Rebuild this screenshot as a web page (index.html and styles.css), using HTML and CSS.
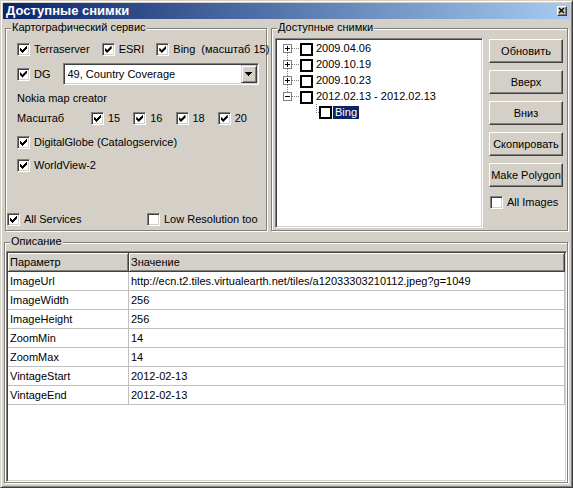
FILE: index.html
```html
<!DOCTYPE html>
<html lang="ru">
<head>
  <meta charset="UTF-8" />
  <title>Доступные снимки</title>
  <link rel="stylesheet" href="styles.css">
</head>
<body>

  <div class="window">

    <!-- Title bar -->
    <div class="titlebar">
      <span class="title">Доступные снимки</span>
      <span class="close-btn">
        <svg width="7" height="7" viewBox="0 0 7 7"><path d="M1 1 L6 6 M6 1 L1 6" stroke="#000" stroke-width="1.4" fill="none"/></svg>
      </span>
    </div>

    <div class="top-row">

      <!-- Map services -->
      <div class="group group-services">
        <span class="group-title">Картографический сервис</span>

        <div class="row">
          <label class="cb"><span class="box checked"></span>Terraserver</label>
          <label class="cb"><span class="box checked"></span>ESRI</label>
          <label class="cb"><span class="box checked"></span>Bing</label>
          <span class="scale-note">(масштаб 15)</span>
        </div>

        <div class="row row-dg">
          <label class="cb"><span class="box checked"></span>DG</label>
          <div class="combo">
            <span class="combo-text">49, Country Coverage</span>
            <span class="combo-btn"><span class="arrow"></span></span>
          </div>
        </div>

        <div class="row row-nokia">Nokia map creator</div>

        <div class="row row-scale">
          <span class="scale-label">Масштаб</span>
          <label class="cb"><span class="box checked"></span>15</label>
          <label class="cb"><span class="box checked"></span>16</label>
          <label class="cb"><span class="box checked"></span>18</label>
          <label class="cb"><span class="box checked"></span>20</label>
        </div>

        <div class="row row-dglobe">
          <label class="cb"><span class="box checked"></span>DigitalGlobe (Catalogservice)</label>
        </div>

        <div class="row row-wv">
          <label class="cb"><span class="box checked"></span>WorldView-2</label>
        </div>

        <div class="row row-bottom">
          <label class="cb cb-all"><span class="box checked"></span>All Services</label>
          <label class="cb"><span class="box"></span>Low Resolution too</label>
        </div>
      </div>

      <!-- Available images -->
      <div class="group group-images">
        <span class="group-title">Доступные снимки</span>

        <div class="tree">
          <div class="node has-next">
            <span class="exp"><svg width="7" height="7" viewBox="0 0 7 7"><path d="M1 3.5h5M3.5 1v5" stroke="#000" shape-rendering="crispEdges"/></svg></span>
            <span class="hline"></span><span class="tbox"></span><span class="node-text">2009.04.06</span>
          </div>
          <div class="node has-next">
            <span class="exp"><svg width="7" height="7" viewBox="0 0 7 7"><path d="M1 3.5h5M3.5 1v5" stroke="#000" shape-rendering="crispEdges"/></svg></span>
            <span class="hline"></span><span class="tbox"></span><span class="node-text">2009.10.19</span>
          </div>
          <div class="node has-next">
            <span class="exp"><svg width="7" height="7" viewBox="0 0 7 7"><path d="M1 3.5h5M3.5 1v5" stroke="#000" shape-rendering="crispEdges"/></svg></span>
            <span class="hline"></span><span class="tbox"></span><span class="node-text">2009.10.23</span>
          </div>
          <div class="node">
            <span class="exp"><svg width="7" height="7" viewBox="0 0 7 7"><path d="M1 3.5h5" stroke="#000" shape-rendering="crispEdges"/></svg></span>
            <span class="hline"></span><span class="tbox"></span><span class="node-text">2012.02.13 - 2012.02.13</span>
          </div>
          <div class="node child">
            <span class="elbow"></span><span class="tbox"></span><span class="sel">Bing</span>
          </div>
        </div>

        <div class="buttons">
          <button class="btn">Обновить</button>
          <button class="btn">Вверх</button>
          <button class="btn">Вниз</button>
          <button class="btn">Скопировать</button>
          <button class="btn">Make Polygon</button>
          <label class="cb cb-images"><span class="box"></span>All Images</label>
        </div>
      </div>

    </div>

    <!-- Description -->
    <div class="group group-desc">
      <span class="group-title">Описание</span>
      <div class="grid">
        <div class="table">
          <div class="th">Параметр</div><div class="th">Значение</div>
          <div class="td">ImageUrl</div><div class="td">http://ecn.t2.tiles.virtualearth.net/tiles/a12033303210112.jpeg?g=1049</div>
          <div class="td">ImageWidth</div><div class="td">256</div>
          <div class="td">ImageHeight</div><div class="td">256</div>
          <div class="td">ZoomMin</div><div class="td">14</div>
          <div class="td">ZoomMax</div><div class="td">14</div>
          <div class="td">VintageStart</div><div class="td">2012-02-13</div>
          <div class="td">VintageEnd</div><div class="td">2012-02-13</div>
        </div>
      </div>
    </div>

  </div>

</body>
</html>
```

FILE: styles.css
```css
body {
  margin: 0;
  font-family: "Liberation Sans", Arial, sans-serif;
  font-size: 11px;
  color: #000;
}
.window {
  box-sizing: border-box;
  width: 573px;
  height: 488px;
  background: #d4d0c8;
  border: 1px solid;
  border-color: #d4d0c8 #404040 #404040 #d4d0c8;
  box-shadow: inset 1px 1px #fff, inset -1px -1px #808080;
  padding: 2px;
  display: flex;
  flex-direction: column;
}
.titlebar {
  flex: none;
  height: 16px;
  display: flex;
  align-items: center;
  justify-content: space-between;
  padding: 0 3px;
  background: linear-gradient(to right, #0a246a, #a6caf0);
}
.title {
  color: #fff;
  font-weight: bold;
  font-size: 13px;
  line-height: 16px;
}
.close-btn {
  box-sizing: border-box;
  width: 10px;
  height: 10px;
  border: 1px solid;
  border-color: #fff #404040 #404040 #fff;
  box-shadow: inset -1px -1px #808080;
  background: #d4d0c8;
  display: flex;
  align-items: flex-start;
  justify-content: flex-start;
}

/* group boxes */
.group {
  position: relative;
  box-sizing: border-box;
  border: 1px solid #808080;
  box-shadow: 1px 1px 0 #fff, inset 1px 1px 0 #fff;
}
.group-title {
  position: absolute;
  top: -8px;
  left: 5px;
  padding: 0 1px;
  line-height: 13px;
  background: #d4d0c8;
  white-space: nowrap;
}
.top-row {
  display: flex;
  gap: 4px;
  height: 203px;
  margin: 9px 0 0 2px;
}
.group-services {
  width: 262px;
  padding: 14px 0 4px 11px;
  display: flex;
  flex-direction: column;
}
.row {
  display: flex;
  align-items: center;
  gap: 12px;
  height: 13px;
  line-height: 13px;
  white-space: nowrap;
}
.row-dg { height: 22px; margin-top: 7px; }
.row-nokia { margin-top: 7px; }
.row-scale { margin-top: 7px; gap: 13px; }
.scale-label { width: 61px; }
.row-dglobe { margin-top: 11px; }
.row-wv { margin-top: 10px; }
.row-bottom { margin-top: auto; margin-left: -10px; gap: 0; }
.cb-all { width: 140px; }
.scale-note { margin-left: -6px; }

.cb {
  display: flex;
  align-items: center;
  gap: 4px;
  white-space: nowrap;
  line-height: 13px;
}
.box {
  flex: none;
  box-sizing: border-box;
  width: 13px;
  height: 13px;
  border: 1px solid;
  border-color: #808080 #fff #fff #808080;
  box-shadow: inset 1px 1px #404040, inset -1px -1px #d4d0c8;
  background: #fff;
  display: flex;
  align-items: center;
  justify-content: center;
}
.box.checked::after {
  content: "";
  width: 7px;
  height: 7px;
  background: #000;
  clip-path: polygon(0 2px, 1px 2px, 1px 3px, 2px 3px, 2px 4px, 3px 4px, 3px 3px, 4px 3px, 4px 2px, 5px 2px, 5px 1px, 6px 1px, 6px 0, 7px 0, 7px 3px, 6px 3px, 6px 4px, 5px 4px, 5px 5px, 4px 5px, 4px 6px, 3px 6px, 3px 7px, 2px 7px, 2px 6px, 1px 6px, 1px 5px, 0 5px);
}

.combo {
  box-sizing: border-box;
  width: 196px;
  height: 22px;
  border: 1px solid;
  border-color: #808080 #fff #fff #808080;
  box-shadow: inset 1px 1px #404040, inset -1px -1px #d4d0c8;
  background: #fff;
  padding: 1px;
  display: flex;
}
.combo-text {
  flex: 1;
  padding-left: 3px;
  line-height: 18px;
}
.combo-btn {
  box-sizing: border-box;
  width: 16px;
  height: 18px;
  border: 1px solid;
  border-color: #d4d0c8 #404040 #404040 #d4d0c8;
  box-shadow: inset 1px 1px #fff, inset -1px -1px #808080;
  background: #d4d0c8;
  display: flex;
  align-items: center;
  justify-content: center;
}
.arrow {
  width: 7px;
  height: 4px;
  background: #000;
  clip-path: polygon(0 0, 7px 0, 7px 1px, 6px 1px, 6px 2px, 5px 2px, 5px 3px, 4px 3px, 4px 4px, 3px 4px, 3px 3px, 2px 3px, 2px 2px, 1px 2px, 1px 1px, 0 1px);
}

/* tree */
.group-images {
  width: 297px;
  display: flex;
  gap: 6px;
  padding: 9px 4px 2px 3px;
}
.tree {
  box-sizing: border-box;
  width: 208px;
  height: 190px;
  border: 1px solid;
  border-color: #808080 #fff #fff #808080;
  box-shadow: inset 1px 1px #404040, inset -1px -1px #d4d0c8;
  background: #fff;
  padding: 1px;
}
.node {
  display: flex;
  align-items: flex-start;
  height: 16px;
  line-height: 16px;
  padding-left: 6px;
  white-space: nowrap;
}
.exp {
  position: relative;
  flex: none;
  box-sizing: border-box;
  width: 9px;
  height: 9px;
  margin-top: 4px;
  border: 1px solid #808080;
  background: #fff;
  display: flex;
}
.node.has-next .exp::after {
  content: "";
  position: absolute;
  left: 3px;
  top: 8px;
  height: 7px;
  border-left: 1px dotted #808080;
}
.hline {
  flex: none;
  width: 7px;
  margin-top: 8px;
  border-top: 1px dotted #808080;
}
.tbox {
  flex: none;
  box-sizing: border-box;
  width: 13px;
  height: 13px;
  margin: 3px 0 0 1px;
  border: 2px solid #000;
  background: #fff;
}
.node-text { margin-left: 3px; }
.node.child { padding-left: 39px; }
.elbow {
  flex: none;
  width: 2px;
  height: 8px;
  border-left: 1px dotted #808080;
  border-bottom: 1px dotted #808080;
}
.node.child .tbox { margin: 2px 0 0 0; }
.sel {
  margin: 2px 0 0 1px;
  padding: 0 2px;
  line-height: 13px;
  background: #0a246a;
  color: #fff;
}

.buttons {
  display: flex;
  flex-direction: column;
  gap: 7px;
  padding-top: 1px;
}
.btn {
  box-sizing: border-box;
  width: 74px;
  height: 24px;
  padding: 0;
  font: inherit;
  color: #000;
  background: #d4d0c8;
  border: 1px solid;
  border-color: #fff #404040 #404040 #fff;
  box-shadow: inset -1px -1px #808080;
  line-height: 20px;
}
.cb-images { margin: 2px 0 0 1px; }

/* description grid */
.group-desc {
  width: 564px;
  height: 241px;
  margin: 11px 0 0 1px;
  padding: 8px 0 0 1px;
}
.grid {
  box-sizing: border-box;
  width: 561px;
  height: 231px;
  border: 1px solid;
  border-color: #808080 #fff #fff #808080;
  box-shadow: inset 1px 1px #404040, inset -1px -1px #d4d0c8;
  background: #fff;
  padding: 1px;
}
.table {
  display: grid;
  grid-template-columns: 121px 436px;
  grid-auto-rows: 19px;
}
.th {
  box-sizing: border-box;
  border-right: 1px solid #404040;
  border-bottom: 1px solid #404040;
  box-shadow: inset 1px 1px #fff, inset -1px -1px #808080;
  background: #d4d0c8;
  padding-left: 2px;
  line-height: 18px;
}
.td {
  box-sizing: border-box;
  border-right: 1px solid #c0c0c0;
  border-bottom: 1px solid #c0c0c0;
  padding-left: 2px;
  line-height: 18px;
  white-space: nowrap;
}
```
